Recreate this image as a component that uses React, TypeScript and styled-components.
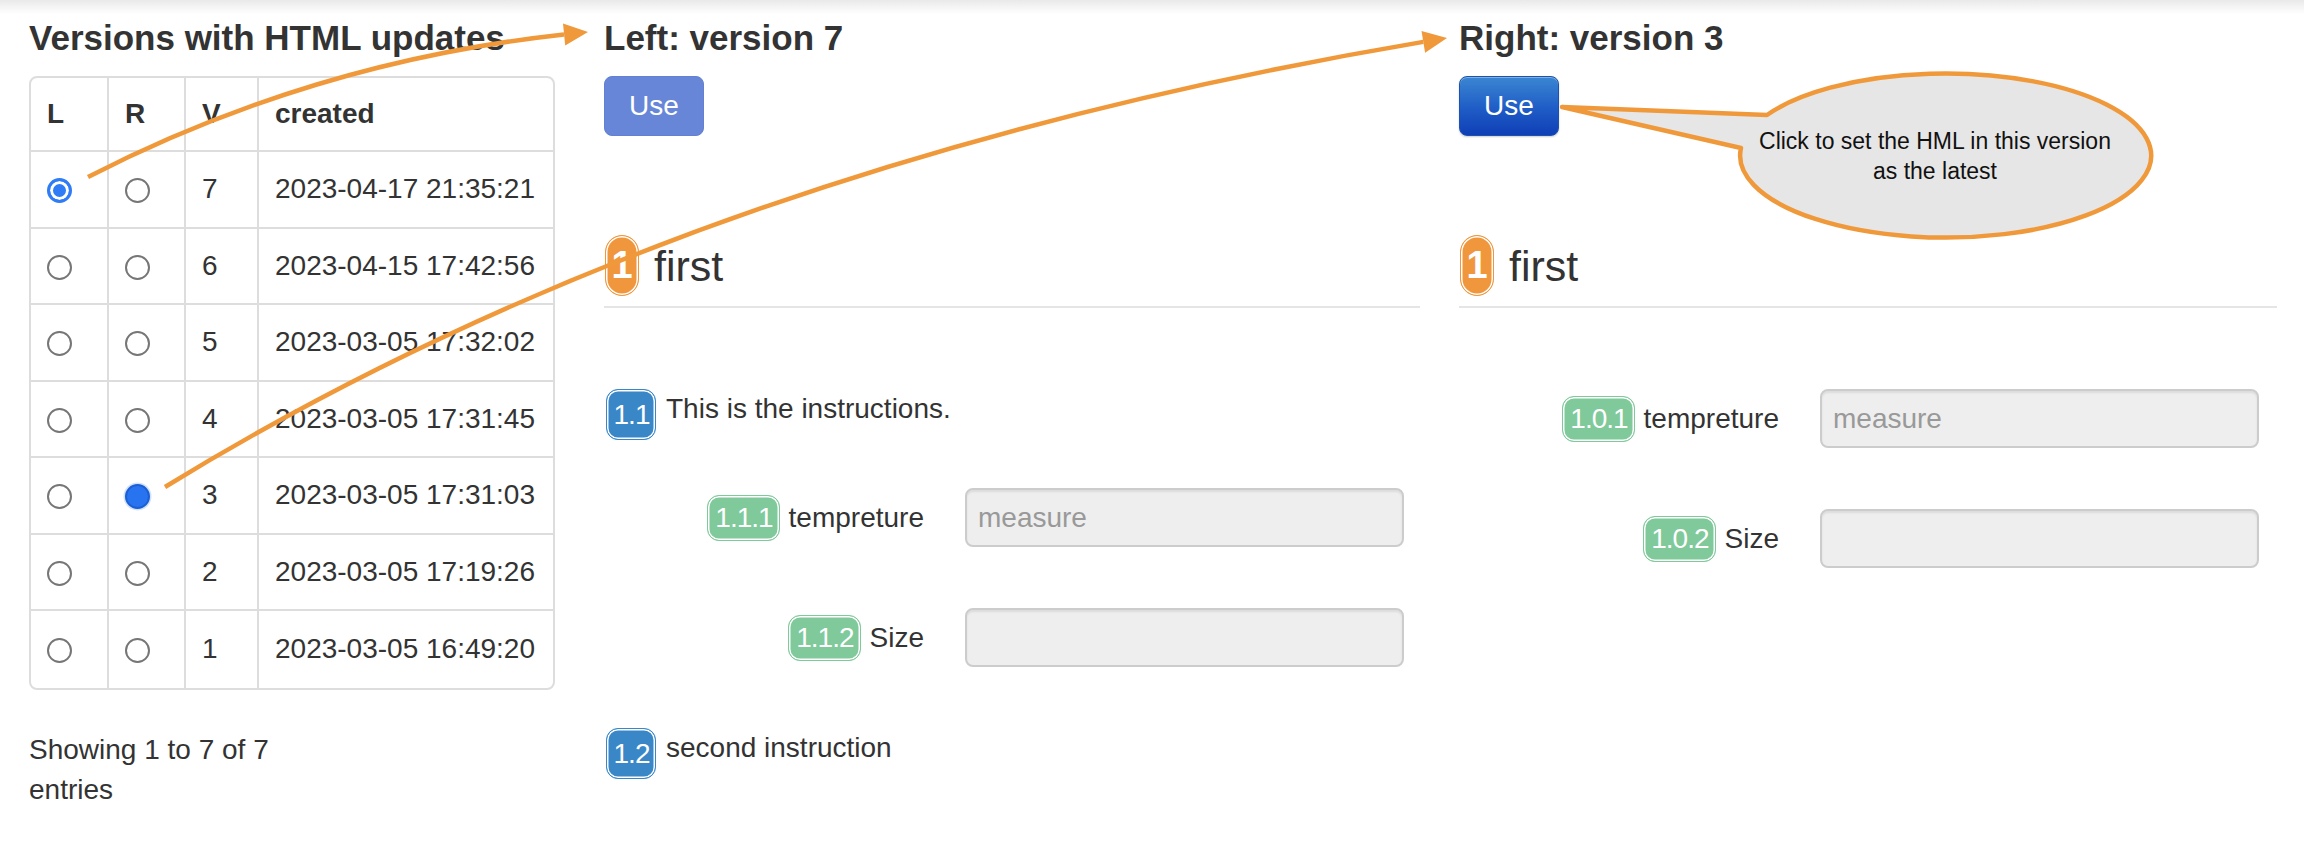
import styled, { createGlobalStyle, css } from "styled-components";

const GlobalStyle = createGlobalStyle`
  html, body {
    margin: 0;
    padding: 0;
    background: #fff;
  }
  body {
    font-family: "Liberation Sans", Arial, Helvetica, sans-serif;
    color: #333;
  }
  * {
    box-sizing: border-box;
  }
`;

const Page = styled.div`
  position: relative;
  width: 2304px;
  height: 848px;
  overflow: hidden;
`;

const TopShade = styled.div`
  height: 14px;
  background: linear-gradient(#e9e9e9, #fff);
`;

const Columns = styled.div`
  display: grid;
  grid-template-columns: 536px 816px 818px;
  column-gap: 39px;
  padding: 5px 0 0 29px;
`;

const Heading = styled.h4`
  margin: 0 0 20px;
  font-size: 35px;
  line-height: 37px;
  font-weight: bold;
  color: #333;
  white-space: nowrap;
`;

/* versions table */
const Table = styled.table`
  width: 526px;
  table-layout: fixed;
  border-collapse: separate;
  border-spacing: 0;
  border: 2px solid #ddd;
  border-radius: 8px;
  font-size: 28px;
  color: #333;
`;

const HeadCell = styled.th`
  height: 74px;
  padding: 0 0 0 16px;
  text-align: left;
  font-weight: bold;
  vertical-align: middle;
  border-right: 2px solid #ddd;
  border-bottom: 2px solid #ddd;
  &:last-child {
    border-right: none;
  }
`;

const Cell = styled.td`
  height: 76.5px;
  padding: 0 0 0 16px;
  vertical-align: middle;
  white-space: nowrap;
  border-right: 2px solid #ddd;
  border-bottom: 2px solid #ddd;
  &:last-child {
    border-right: none;
  }
  tr:last-child > & {
    border-bottom: none;
  }
`;

type RadioState = "off" | "ring" | "fill";

const Radio = styled.span<{ $state: RadioState }>`
  display: inline-block;
  width: 25px;
  height: 25px;
  border-radius: 50%;
  vertical-align: middle;
  ${({ $state }) =>
    $state === "ring"
      ? css`
          border: 3px solid #2f7cf6;
          background: #2f7cf6;
          box-shadow: inset 0 0 0 3px #fff;
        `
      : $state === "fill"
      ? css`
          border: 2px solid #1c5fd4;
          background: #2873ef;
          box-shadow: 0 0 0 1.5px #d3e2fb;
        `
      : css`
          border: 2px solid #767676;
          background: #fff;
        `}
`;

const Info = styled.div`
  margin-top: 40px;
  width: 262px;
  font-size: 28px;
  line-height: 40px;
  color: #333;
`;

/* version panels */
const Panel = styled.section`
  display: flex;
  flex-direction: column;
  align-items: stretch;
`;

const UseButton = styled.button<{ $active?: boolean }>`
  align-self: flex-start;
  width: 100px;
  height: 60px;
  border-radius: 8px;
  font-family: inherit;
  font-size: 28px;
  color: #fff;
  padding: 0;
  cursor: pointer;
  ${({ $active }) =>
    $active
      ? css`
          border: 1px solid #1f52ad;
          background: linear-gradient(#3a86d2, #1f5cc6 55%, #0f3fb6);
          box-shadow: inset 0 1px 0 rgba(255, 255, 255, 0.35), 0 1px 2px rgba(0, 0, 0, 0.2);
        `
      : css`
          border: 1px solid #6380d2;
          background: #6786d8;
        `}
`;

const SectionTitle = styled.div`
  display: flex;
  align-items: center;
  gap: 15px;
  margin-top: 99px;
  padding: 0 0 10px 1px;
  border-bottom: 2px solid #e5e5e5;
`;

const TitleText = styled.span`
  font-size: 43px;
  line-height: 48px;
  color: #333;
`;

type Tone = "orange" | "blue" | "green";

const toneColor: Record<Tone, string> = {
  orange: "#f0973d",
  blue: "#3a87c8",
  green: "#80c99b",
};

const Badge = styled.span<{ $tone: Tone }>`
  display: inline-flex;
  align-items: center;
  justify-content: center;
  flex-shrink: 0;
  color: #fff;
  background: ${({ $tone }) => toneColor[$tone]};
  border: 1px solid ${({ $tone }) => toneColor[$tone]};
  box-shadow: inset 0 0 0 1.5px #fff;
  white-space: nowrap;
  ${({ $tone }) =>
    $tone === "orange"
      ? css`
          width: 34px;
          height: 61px;
          border-radius: 17px;
          font-size: 38px;
          font-weight: bold;
        `
      : $tone === "blue"
      ? css`
          min-width: 50px;
          height: 51px;
          padding: 0 5px 0 6px;
          border-radius: 12px;
          font-size: 28px;
          letter-spacing: -1px;
        `
      : css`
          height: 46px;
          padding: 0 6px 0 7px;
          border-radius: 12px;
          font-size: 28px;
          letter-spacing: -1px;
        `}
`;

const PanelBody = styled.div`
  padding-top: 81px;
  display: flex;
  flex-direction: column;
`;

const Instruction = styled.div`
  display: flex;
  align-items: flex-start;
  gap: 10px;
  padding-left: 2px;
  margin-bottom: 48px;
  font-size: 28px;
  line-height: 40px;
  color: #333;
`;

const FieldRow = styled.div`
  display: grid;
  grid-template-columns: 320px 439px;
  column-gap: 41px;
  align-items: center;
  margin-bottom: 61px;
`;

const FieldLabel = styled.label`
  display: flex;
  justify-content: flex-end;
  align-items: center;
  gap: 9px;
  font-size: 28px;
  color: #333;
`;

const Input = styled.input`
  width: 100%;
  height: 59px;
  padding: 0 11px;
  background: #eee;
  border: 2px solid #ccc;
  border-radius: 8px;
  box-shadow: inset 0 2px 2px rgba(0, 0, 0, 0.075);
  font-family: inherit;
  font-size: 28px;
  color: #555;
  outline: none;
  &::placeholder {
    color: #999;
  }
`;

/* annotation layer */
const Overlay = styled.svg`
  position: absolute;
  left: 0;
  top: 0;
  width: 2304px;
  height: 848px;
  pointer-events: none;
`;

const CalloutText = styled.div`
  position: absolute;
  left: 1735px;
  top: 126px;
  width: 400px;
  text-align: center;
  font-size: 23px;
  line-height: 30px;
  color: #111;
  pointer-events: none;
`;

const versions = [
  { v: 7, created: "2023-04-17 21:35:21" },
  { v: 6, created: "2023-04-15 17:42:56" },
  { v: 5, created: "2023-03-05 17:32:02" },
  { v: 4, created: "2023-03-05 17:31:45" },
  { v: 3, created: "2023-03-05 17:31:03" },
  { v: 2, created: "2023-03-05 17:19:26" },
  { v: 1, created: "2023-03-05 16:49:20" },
];

type Item =
  | { kind: "text"; num: string; text: string }
  | { kind: "field"; num: string; label: string; placeholder?: string };

const leftItems: Item[] = [
  { kind: "text", num: "1.1", text: "This is the instructions." },
  { kind: "field", num: "1.1.1", label: "tempreture", placeholder: "measure" },
  { kind: "field", num: "1.1.2", label: "Size" },
  { kind: "text", num: "1.2", text: "second instruction" },
];

const rightItems: Item[] = [
  { kind: "field", num: "1.0.1", label: "tempreture", placeholder: "measure" },
  { kind: "field", num: "1.0.2", label: "Size" },
];

function VersionPanel({ title, active, items }: { title: string; active?: boolean; items: Item[] }) {
  return (
    <Panel>
      <Heading>{title}</Heading>
      <UseButton $active={active}>Use</UseButton>
      <SectionTitle>
        <Badge $tone="orange">1</Badge>
        <TitleText>first</TitleText>
      </SectionTitle>
      <PanelBody>
        {items.map((it) =>
          it.kind === "text" ? (
            <Instruction key={it.num}>
              <Badge $tone="blue">{it.num}</Badge>
              <span>{it.text}</span>
            </Instruction>
          ) : (
            <FieldRow key={it.num}>
              <FieldLabel>
                <Badge $tone="green">{it.num}</Badge>
                <span>{it.label}</span>
              </FieldLabel>
              <Input placeholder={it.placeholder} readOnly />
            </FieldRow>
          )
        )}
      </PanelBody>
    </Panel>
  );
}

function Annotations() {
  const orange = "#f0993b";
  return (
    <>
      <Overlay viewBox="0 0 2304 848">
        {/* L radio -> left panel */}
        <path d="M 88 177 Q 312 62 564 34.4" fill="none" stroke={orange} strokeWidth={4.5} />
        <polygon points="588,32 565.2,45.4 563,23.5" fill={orange} />
        {/* R radio -> right panel */}
        <path d="M 165 487 Q 688 166 1423.3 41.9" fill="none" stroke={orange} strokeWidth={4.5} />
        <polygon points="1447,38 1425.1,52.8 1421.5,31" fill={orange} />
        {/* callout bubble */}
        <path
          d="M 1767 115 L 1562 107 L 1741 148 A 205.5 82 0 1 0 1767 115 Z"
          fill="#e6e6e6"
          stroke={orange}
          strokeWidth={4.5}
          strokeLinejoin="round"
        />
      </Overlay>
      <CalloutText>
        Click to set the HML in this version
        <br />
        as the latest
      </CalloutText>
    </>
  );
}

export default function App() {
  return (
    <Page>
      <GlobalStyle />
      <TopShade />
      <Columns>
        <section>
          <Heading>Versions with HTML updates</Heading>
          <Table>
            <colgroup>
              <col style={{ width: 78 }} />
              <col style={{ width: 77 }} />
              <col style={{ width: 73 }} />
              <col style={{ width: 294 }} />
            </colgroup>
            <thead>
              <tr>
                <HeadCell>L</HeadCell>
                <HeadCell>R</HeadCell>
                <HeadCell>V</HeadCell>
                <HeadCell>created</HeadCell>
              </tr>
            </thead>
            <tbody>
              {versions.map((row) => (
                <tr key={row.v}>
                  <Cell>
                    <Radio $state={row.v === 7 ? "ring" : "off"} />
                  </Cell>
                  <Cell>
                    <Radio $state={row.v === 3 ? "fill" : "off"} />
                  </Cell>
                  <Cell>{row.v}</Cell>
                  <Cell>{row.created}</Cell>
                </tr>
              ))}
            </tbody>
          </Table>
          <Info>Showing 1 to 7 of 7 entries</Info>
        </section>
        <VersionPanel title="Left: version 7" items={leftItems} />
        <VersionPanel title="Right: version 3" active items={rightItems} />
      </Columns>
      <Annotations />
    </Page>
  );
}
